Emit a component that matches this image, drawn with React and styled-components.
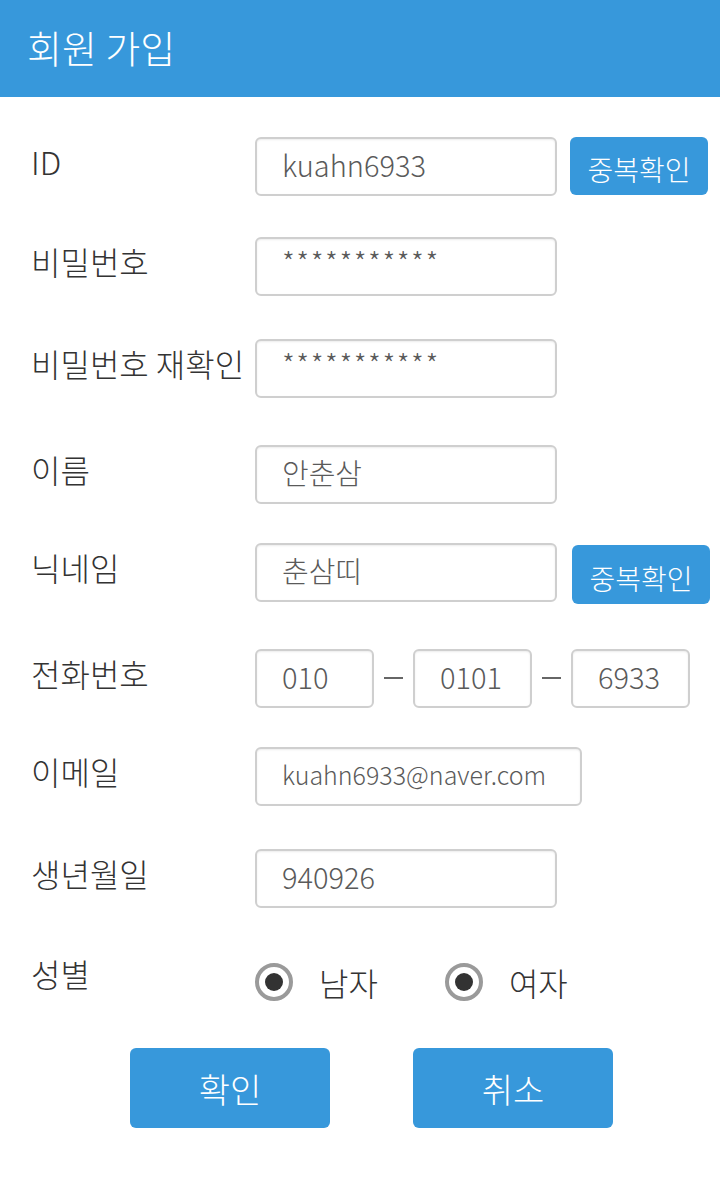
import styled, { createGlobalStyle } from 'styled-components';

const GlobalStyle = createGlobalStyle`
  body {
    margin: 0;
    background: #fff;
    font-family: 'Noto Sans CJK KR', 'Noto Sans', sans-serif;
    font-weight: 300;
  }
`;

const Page = styled.div`
  width: 720px;
  min-height: 1200px;
  background: #fff;
`;

const Header = styled.header`
  height: 97px;
  background-color: #3798db;
  display: flex;
  align-items: center;
  padding-left: 27px;
  box-sizing: border-box;
`;

const Title = styled.h1`
  margin: 0 0 4px;
  font-size: 38px;
  font-weight: 300;
  color: #fff;
`;

const Form = styled.form`
  display: flex;
  flex-direction: column;
  padding-left: 31px;
`;

const Row = styled.div`
  display: grid;
  grid-template-columns: 224px 1fr;
  align-items: start;
  height: ${(p) => p.$h || 59}px;
  margin-top: ${(p) => p.$top}px;
`;

const Label = styled.label`
  font-size: 32px;
  line-height: 40px;
  color: #333;
  padding-top: 4px;
  white-space: nowrap;
`;

const Field = styled.div`
  display: flex;
  align-items: flex-start;
  gap: ${(p) => p.$gap || 13}px;
`;

const Input = styled.div`
  width: ${(p) => p.$w || 302}px;
  height: 59px;
  box-sizing: border-box;
  border: 2px solid #cfcfcf;
  border-radius: 6px;
  box-shadow: inset 0 1px 2px rgba(0, 0, 0, 0.08);
  padding-left: 25px;
  display: flex;
  align-items: center;
  font-size: ${(p) => p.$size || 29}px;
  color: #5a5a5a;
  padding-bottom: ${(p) => (p.$stars ? 12 : 5)}px;
  letter-spacing: ${(p) => (p.$stars ? 1.5 : 0)}px;
`;

const SmallButton = styled.button`
  width: 138px;
  height: ${(p) => p.$h || 58}px;
  margin-top: ${(p) => p.$down || 0}px;
  border: none;
  border-radius: 6px;
  background-color: #3798db;
  color: #fff;
  font-family: inherit;
  font-weight: 300;
  font-size: 28px;
  padding: 6px 0 0;
`;

const Dash = styled.span`
  width: 19px;
  height: 2px;
  margin-top: 28px;
  background: #666;
`;

const Radios = styled.div`
  display: flex;
  align-items: center;
  padding-top: 10px;
`;

const RadioItem = styled.div`
  display: flex;
  align-items: center;
  gap: 26px;
  margin-right: ${(p) => p.$mr || 0}px;
  font-size: 32px;
  color: #333;
`;

const RadioCircle = styled.span`
  width: 38px;
  height: 38px;
  box-sizing: border-box;
  border: 4px solid #9a9a9a;
  border-radius: 50%;
  display: flex;
  align-items: center;
  justify-content: center;
  &::after {
    content: '';
    width: 18px;
    height: 18px;
    border-radius: 50%;
    background: #333;
  }
`;

const Actions = styled.div`
  display: flex;
  gap: 83px;
  padding-left: 130px;
  margin-top: 19px;
`;

const BigButton = styled.button`
  width: 200px;
  height: 80px;
  border: none;
  border-radius: 6px;
  background-color: #3798db;
  color: #fff;
  font-family: inherit;
  font-weight: 300;
  font-size: 34px;
`;

const App = () => {
  return (
    <Page>
      <GlobalStyle />
      <Header>
        <Title>회원 가입</Title>
      </Header>
      <Form>
        <Row $top={40}>
          <Label>ID</Label>
          <Field>
            <Input>kuahn6933</Input>
            <SmallButton type='button'>중복확인</SmallButton>
          </Field>
        </Row>
        <Row $top={41}>
          <Label>비밀번호</Label>
          <Input $stars>***********</Input>
        </Row>
        <Row $top={43}>
          <Label>비밀번호 재확인</Label>
          <Input $stars>***********</Input>
        </Row>
        <Row $top={47}>
          <Label>이름</Label>
          <Input>안춘삼</Input>
        </Row>
        <Row $top={39}>
          <Label>닉네임</Label>
          <Field $gap={15}>
            <Input>춘삼띠</Input>
            <SmallButton type='button' $down={2} $h={59}>
              중복확인
            </SmallButton>
          </Field>
        </Row>
        <Row $top={47}>
          <Label>전화번호</Label>
          <Field $gap={10}>
            <Input $w={119}>010</Input>
            <Dash />
            <Input $w={119}>0101</Input>
            <Dash />
            <Input $w={119}>6933</Input>
          </Field>
        </Row>
        <Row $top={39}>
          <Label>이메일</Label>
          <Input $w={327} $size={25}>
            kuahn6933@naver.com
          </Input>
        </Row>
        <Row $top={43}>
          <Label>생년월일</Label>
          <Input>940926</Input>
        </Row>
        <Row $top={41} $h={80}>
          <Label>성별</Label>
          <Radios>
            <RadioItem $mr={67}>
              <RadioCircle />
              남자
            </RadioItem>
            <RadioItem>
              <RadioCircle />
              여자
            </RadioItem>
          </Radios>
        </Row>
      </Form>
      <Actions>
        <BigButton type='button'>확인</BigButton>
        <BigButton type='button'>취소</BigButton>
      </Actions>
    </Page>
  );
};

export default App;
